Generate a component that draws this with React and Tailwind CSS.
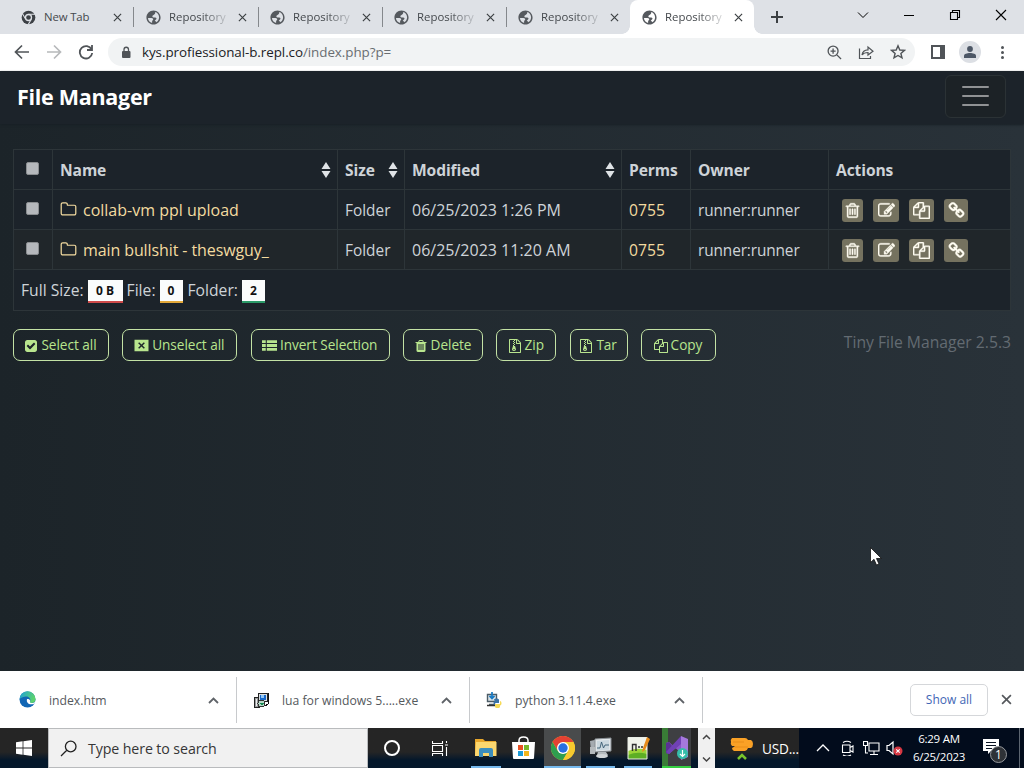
import React from "react";

const FA = {
  trashO:
    "M704 736v576q0 14-9 23t-23 9h-64q-14 0-23-9t-9-23v-576q0-14 9-23t23-9h64q14 0 23 9t9 23zm256 0v576q0 14-9 23t-23 9h-64q-14 0-23-9t-9-23v-576q0-14 9-23t23-9h64q14 0 23 9t9 23zm256 0v576q0 14-9 23t-23 9h-64q-14 0-23-9t-9-23v-576q0-14 9-23t23-9h64q14 0 23 9t9 23zm128 724v-948h-896v948q0 22 7 40.500t14.500 27 10.500 8.500h832q3 0 10.500-8.500t14.500-27 7-40.500zm-672-1076h448l-48-117q-7-9-17-11h-317q-10 2-17 11zm928 32v64q0 14-9 23t-23 9h-96v948q0 83-47 143.500t-113 60.500h-832q-66 0-113-58.500t-47-141.500v-952h-96q-14 0-23-9t-9-23v-64q0-14 9-23t23-9h309l70-167q15-37 54-63t79-26h320q40 0 79 26t54 63l70 167h309q14 0 23 9t9 23z",
  trash:
    "M704 1376v-704q0-14-9-23t-23-9h-64q-14 0-23 9t-9 23v704q0 14 9 23t23 9h64q14 0 23-9t9-23zm256 0v-704q0-14-9-23t-23-9h-64q-14 0-23 9t-9 23v704q0 14 9 23t23 9h64q14 0 23-9t9-23zm256 0v-704q0-14-9-23t-23-9h-64q-14 0-23 9t-9 23v704q0 14 9 23t23 9h64q14 0 23-9t9-23zm-544-992h448l-48-117q-7-9-17-11h-317q-10 2-17 11zm928 32v64q0 14-9 23t-23 9h-96v948q0 83-47 143.500t-113 60.500h-832q-66 0-113-58.500t-47-141.500v-952h-96q-14 0-23-9t-9-23v-64q0-14 9-23t23-9h309l70-167q15-37 54-63t79-26h320q40 0 79 26t54 63l70 167h309q14 0 23 9t9 23z",
  edit: "M888 1184l116-116-152-152-116 116v56h96v96h56zm440-720q-16-16-33 1l-350 350q-17 17-1 33t33-1l350-350q17-17 1-33zm80 594v190q0 119-84.500 203.500t-203.500 84.500h-832q-119 0-203.500-84.500t-84.500-203.500v-832q0-119 84.500-203.500t203.500-84.500h832q63 0 117 25 15 7 18 23 3 17-9 29l-49 49q-14 14-32 8-23-6-45-6h-832q-66 0-113 47t-47 113v832q0 66 47 113t113 47h832q66 0 113-47t47-113v-126q0-13 9-22l64-64q15-15 35-7t20 29zm-96-738l288 288-672 672h-288v-288zm444 132l-92 92-288-288 92-92q28-28 68-28t68 28l152 152q28 28 28 68t-28 68z",
  files:
    "M1696 384q40 0 68 28t28 68v1216q0 40-28 68t-68 28h-960q-40 0-68-28t-28-68v-288h-544q-40 0-68-28t-28-68v-672q0-40 20-88t48-76l408-408q28-28 76-48t88-20h416q40 0 68 28t28 68v328q68-40 128-40h416zm-544 213l-299 299h299v-299zm-640-384l-299 299h299v-299zm196 647l316-316v-416h-384v416q0 40-28 68t-68 28h-416v640h512v-256q0-40 20-88t48-76zm956 804v-1152h-384v416q0 40-28 68t-68 28h-416v640h896z",
  link: "M1520 1216q0-40-28-68l-208-208q-28-28-68-28-42 0-72 32 3 3 19 18.500t21.500 21.500 15 19 13 25.500 3.500 27.500q0 40-28 68t-68 28q-15 0-27.500-3.500t-25.500-13-19-15-21.500-21.500-18.500-19q-33 31-33 73 0 40 28 68l206 207q27 27 68 27 40 0 68-26l147-146q28-28 28-67zm-703-705q0-40-28-68l-206-207q-28-28-68-28-39 0-68 27l-147 146q-28 28-28 67 0 40 28 68l208 208q27 27 68 27 42 0 72-31-3-3-19-18.500t-21.500-21.500-15-19-13-25.500-3.500-27.500q0-40 28-68t68-28q15 0 27.500 3.500t25.500 13 19 15 21.500 21.500 18.500 19q33-31 33-73zm895 705q0 120-85 203l-147 146q-83 83-203 83-121 0-204-85l-206-207q-83-83-83-203 0-123 88-209l-88-88q-86 88-208 88-120 0-204-84l-208-208q-84-84-84-204t85-203l147-146q83-83 203-83 121 0 204 85l206 207q83 83 83 203 0 123-88 209l88 88q86-88 208-88 120 0 204 84l208 208q84 84 84 204z",
  folder:
    "M1600 1312v-704q0-40-28-68t-68-28h-704q-40 0-68-28t-28-68v-64q0-40-28-68t-68-28h-320q-40 0-68 28t-28 68v960q0 40 28 68t68 28h1216q40 0 68-28t28-68zm128-704v704q0 92-66 158t-158 66h-1216q-92 0-158-66t-66-158v-960q0-92 66-158t158-66h320q92 0 158 66t66 158v32h672q92 0 158 66t66 158z",
  check:
    "M813 1299l614-614q19-19 19-45t-19-45l-102-102q-19-19-45-19t-45 19l-467 467-211-211q-19-19-45-19t-45 19l-102 102q-19 19-19 45t19 45l358 358q19 19 45 19t45-19zm851-883v960q0 119-84.500 203.500t-203.500 84.500h-960q-119 0-203.500-84.500t-84.500-203.500v-960q0-119 84.500-203.500t203.500-84.500h960q119 0 203.500 84.500t84.500 203.500z",
  archive:
    "M768 384v-128h-128v128h128zm128 128v-128h-128v128h128zm-128 128v-128h-128v128h128zm128 128v-128h-128v128h128zm700-388q28 28 48 76t20 88v1152q0 40-28 68t-68 28h-1344q-40 0-68-28t-28-68v-1600q0-40 28-68t68-28h896q40 0 88 20t76 48zm-444-244v376h376q-10-29-22-41l-313-313q-12-12-41-22zm384 1528v-1024h-416q-40 0-68-28t-28-68v-416h-128v128h-128v-128h-512v1536h1280zm-627-721l107 349q8 27 8 52 0 83-72.500 137.500t-183.500 54.500-183.500-54.500-72.500-137.500q0-25 8-52 21-63 120-396v-128h128v128h79q22 0 39 13t23 34zm-141 465q53 0 90.500-19t37.500-45-37.500-45-90.500-19-90.500 19-37.500 45 37.500 45 90.500 19z",
  close:
    "M60 200h1672v1392h-1672zM616 496L496 616L776 896L496 1176L616 1296L896 1016L1176 1296L1296 1176L1016 896L1296 616L1176 496L896 776L616 496z",
  list: "M0 256h448v340h-448zM576 256h1216v340h-1216zM0 726h448v340h-448zM576 726h1216v340h-1216zM0 1196h448v340h-448zM576 1196h1216v340h-1216z",
};

function Fa({ name, className }) {
  return (
    <svg viewBox="0 0 1792 1792" fill="currentColor" fillRule={name === "close" ? "evenodd" : "nonzero"} className={`shrink-0 ${className}`}>
      <path d={FA[name]} />
    </svg>
  );
}

function Line({ d, className, sw = 1.5, box = 16 }) {
  return (
    <svg viewBox={`0 0 ${box} ${box}`} fill="none" stroke="currentColor" strokeWidth={sw} className={`shrink-0 ${className}`}>
      <path d={d} />
    </svg>
  );
}

const CROSS = "M1 1L9 9M9 1L1 9";

function GlobeIcon() {
  return (
    <svg viewBox="0 0 24 24" className="size-[17px] shrink-0 -ml-px">
      <path
        fill="#55595e"
        d="M12 2C6.480 2 2 6.480 2 12s4.480 10 10 10 10-4.480 10-10S17.520 2 12 2zM4.200 12.600c2.300.2 4.500-.3 6.300.5 1.300.6 1.500 2 .4 2.900-.8.700-1 1.500-.9 2.700v.9C6.800 18.800 4.300 16 4.200 12.600zM19.600 13.900c-.5 2-1.700 3.700-3.400 4.800-.4-1.200-1.400-1.500-2.400-1.700.3-1.600 1.500-2 2.300-3 .6-1-.5-1.800-1.600-2-1.600-.2-3.400.2-4-1.100-.5-1.300.5-2.100 1.600-2.600 1.300-.6 2.300-1.500 2.300-2.900 0-.5.1-.7.3-1 3 1.100 5.100 4 5.200 7.300z"
      />
    </svg>
  );
}

function MonoChrome() {
  return (
    <svg viewBox="0 0 16 16" className="size-[15px] shrink-0">
      <circle cx="8" cy="8" r="7.300" fill="#3c4045" />
      <circle cx="8" cy="8" r="3.200" fill="#3c4045" stroke="#dee1e6" strokeWidth="1.400" />
      <path d="M8 4.500H15M5 9.800L1.600 3.900M11 9.800L7.600 15.600" stroke="#dee1e6" strokeWidth="1.100" fill="none" />
    </svg>
  );
}

function Tab({ label, active, first, last }) {
  return (
    <div className={`flex items-center h-[34px] shrink-0 ${first ? "w-[134px] pl-[21px]" : "w-[124px] pl-[12px]"} ${active ? "relative rounded-t-lg bg-white" : ""}`}>
      {first ? <MonoChrome /> : <GlobeIcon />}
      <span
        className={`shrink-0 whitespace-nowrap text-[#45494d] ${
          first
            ? "ml-2 w-[62px] text-[11.400px] tracking-[-0.150px]"
            : "ml-[7px] w-[60px] text-[11.400px] [mask-image:linear-gradient(to_right,#000_55%,#0003_95%)]"
        }`}
      >
        {label}
      </span>
      <Line d={CROSS} box={10} sw={1.300} className={`size-[9px] text-[#3c4043] ${first ? "ml-[7px]" : "ml-[9px]"}`} />
      {!active && !last && <span className={`h-5 w-px shrink-0 bg-[#85888c] ${first ? "ml-[11px]" : "-mr-px ml-[11px]"}`} />}
      {active && (
        <>
          <span className="absolute bottom-0 -left-2 size-2 bg-[radial-gradient(circle_at_0_0,#dee1e6_7.500px,#fff_8px)]" />
          <span className="absolute bottom-0 -right-2 size-2 bg-[radial-gradient(circle_at_100%_0,#dee1e6_7.500px,#fff_8px)]" />
        </>
      )}
    </div>
  );
}

function TabStrip() {
  return (
    <div className="flex h-[34px] bg-[#dee1e6]">
      <Tab label="New Tab" first />
      <Tab label="Repository" />
      <Tab label="Repository" />
      <Tab label="Repository" />
      <Tab label="Repository" last />
      <Tab label="Repository" active />
      <Line d="M8 2V14M2 8H14" sw={2} className="mt-[9px] ml-[15px] size-4 text-[#3c4043]" />
      <div className="ml-auto flex h-[29px] items-center text-black">
        <Line d="M3 5.500L8 10.500L13 5.500" sw={1} className="mr-[30px] size-4" />
        <Line d="M3 8.500H13" sw={1} className="mr-[30px] size-4" />
        <Line d="M3.500 5.500H10.500V12.500H3.500ZM5.500 5.500V3.500H12.500V10.500H10.500" sw={1.100} className="mr-[30px] size-4" />
        <Line d="M3 3L13 13M13 3L3 13" sw={1.100} className="mr-[15px] size-4" />
      </div>
    </div>
  );
}

function Toolbar() {
  return (
    <div className="flex h-[37px] items-center bg-white pb-px pr-[14px] pl-[14px] text-[#505458]">
      <Line d="M15 8H2M8 1.500L1.500 8L8 14.500" sw={1.700} className="size-4" />
      <Line d="M1 8H14M8 1.500L14.500 8L8 14.500" sw={1.700} className="ml-4 size-4 text-[#b7b9bb]" />
      <Line d="M13.600 5.500A6.200 6.200 0 1 0 14.200 9M14 1V6H9" sw={1.800} className="ml-4 size-4" />
      <div className="ml-[14px] flex h-[28px] w-[807px] items-center rounded-full bg-[#f1f3f4] pl-[13px]">
        <svg viewBox="0 0 10 13" className="h-[13px] w-[10px]">
          <rect x="1" y="5" width="8.500" height="7" rx="1" fill="#505458" />
          <path d="M3 5V3.500a2.200 2.200 0 0 1 4.500 0V5" fill="none" stroke="#505458" strokeWidth="1.300" />
        </svg>
        <span className="ml-[11px] text-[13.400px] tracking-[-0.060px] whitespace-nowrap text-[#696d71]">
          <span className="text-[#202124]">kys.profiessional-b.repl.co</span>/index.php?p=
        </span>
        <div className="mr-[9px] ml-auto flex items-center gap-4">
          <Line d="M10.500 10.500L15 15M6.500 3.800V9.200M3.800 6.500H9.200M11.800 6.500A5.300 5.300 0 1 1 1.200 6.500A5.300 5.300 0 1 1 11.800 6.500" sw={1.400} className="size-[15px]" />
          <Line d="M1.500 4.500V14.500H12.500V12M4 11C4.500 7.500 6.500 6 10 5.900V3L15 7.200L10 11V8.500C7.500 8.500 5.500 9 4 11Z" sw={1.200} className="size-4" />
          <Line d="M8 1.800L9.800 6L14.400 6.400L10.900 9.400L12 13.900L8 11.500L4 13.900L5.100 9.400L1.600 6.400L6.200 6Z" sw={1.400} className="size-4" />
        </div>
      </div>
      <svg viewBox="0 0 14 14" className="ml-4 size-[14px]">
        <rect x="1" y="1" width="12" height="12" fill="none" stroke="#505458" strokeWidth="2" />
        <rect x="9" y="1" width="5" height="12" fill="#505458" />
      </svg>
      <span className="ml-[14px] flex size-[22px] items-center justify-center rounded-full bg-[#dcdfe4]">
        <svg viewBox="0 0 12 12" className="size-3" fill="#4d5766">
          <circle cx="6" cy="3" r="2.900" />
          <path d="M0 12V9.800C0 8 3 7 6 7s6 1 6 2.800V12z" />
        </svg>
      </span>
      <span className="ml-5 flex flex-col gap-[2px]">
        <i className="size-[3px] rounded-full bg-[#505458]" />
        <i className="size-[3px] rounded-full bg-[#505458]" />
        <i className="size-[3px] rounded-full bg-[#505458]" />
      </span>
    </div>
  );
}

function Check() {
  return <span className="mb-[3px] size-[13px] rounded-[2px] border border-[#8a8d90] bg-[#b5b8bc]" />;
}

function Sort() {
  return (
    <svg viewBox="0 0 10 16" className="mb-px ml-auto h-4 w-[10px]" fill="#dfe3e6">
      <path d="M5 0L9.500 7H.5zM5 16L.5 9h9z" />
    </svg>
  );
}

const GRID = "grid grid-cols-[39px_285px_67px_217px_69px_138px_182px]";
const CELL = "flex h-10 items-center border-t border-l border-[#2d3539] pl-[7px] whitespace-nowrap";

function HeadCell({ children, sort }) {
  return (
    <div className={`${CELL} pt-[2px] pr-[6px] text-[15.600px] font-bold tracking-[-0.100px]`}>
      {children}
      {sort && <Sort />}
    </div>
  );
}

function Action({ icon, className }) {
  return (
    <span className={`flex h-[23px] items-center justify-center rounded-[3px] bg-[#75725f] text-[#fffdf2] ${className}`}>
      <Fa name={icon} className="size-[17px] stroke-[#fffdf2] stroke-[40]" />
    </span>
  );
}

function FileRow({ name, date, shade, nameClass }) {
  return (
    <div className={`${GRID} ${shade}`}>
      <div className={`${CELL} pl-[12px]`}>
        <Check />
      </div>
      <div className={`${CELL} pt-px text-[#f3dba0]`}>
        <Fa name="folder" className="mb-px size-[17px]" />
        <span className={`ml-[6px] text-[16px] ${nameClass}`}>{name}</span>
      </div>
      <div className={`${CELL} pt-[2px]`}>Folder</div>
      <div className={`${CELL} pt-px text-[16px]`}>{date}</div>
      <div className={`${CELL} pt-[2px] text-[15.700px] text-[#f3dba0]`}>0755</div>
      <div className={`${CELL} pt-[2px] tracking-[-0.120px]`}>runner:runner</div>
      <div className={`${CELL} pt-[2px] pl-[13px]`}>
        <Action icon="trashO" className="w-[21px]" />
        <Action icon="edit" className="ml-[10px] w-[26px]" />
        <Action icon="files" className="ml-[10px] w-[25px]" />
        <Action icon="link" className="ml-[10px] w-[24px]" />
      </div>
    </div>
  );
}

function Stat({ value, className }) {
  return (
    <span className={`mt-px flex h-[23px] items-center justify-center border-b-2 bg-[#fafcfc] pt-px text-[12px] font-bold text-[#111] ${className}`}>
      {value}
    </span>
  );
}

function ToolButton({ icon, label, className, iconClass = "size-[14px] mr-[3px]" }) {
  return (
    <div className={`flex h-8 items-center justify-center rounded-[7px] border border-[#c3e2a5] pt-px pr-px text-[13.600px] tracking-[-0.030px] whitespace-nowrap text-[#b8e58e] ${className}`}>
      <Fa name={icon} className={iconClass} />
      {label}
    </div>
  );
}

function FileManager() {
  return (
    <div className="h-[600px] bg-linear-to-r from-[#1c2429] to-[#293239] text-[15.400px] text-[#ced3d8]">
      <div className="flex h-[53px] items-center justify-between bg-[#1c232a] pr-[18px] pb-[2px] pl-[17px] shadow-[0_1px_2px_#182026]">
        <span className="pt-[2px] text-[21.500px] font-bold tracking-[-0.280px] text-white">File Manager</span>
        <span className="flex h-[43px] w-[61px] flex-col items-center justify-center gap-[7px] rounded-md border border-[#2b3235] bg-[#1c2226] pb-px">
          <i className="h-[2px] w-[27px] rounded bg-[#909294]" />
          <i className="h-[2px] w-[27px] rounded bg-[#909294]" />
          <i className="h-[2px] w-[27px] rounded bg-[#909294]" />
        </span>
      </div>

      <div className="mt-[25px] ml-[13px] w-[998px] border-r border-b border-[#2d3539] bg-[#1c232a]">
        <div className={GRID}>
          <div className={`${CELL} pl-[12px]`}>
            <Check />
          </div>
          <HeadCell sort>Name</HeadCell>
          <HeadCell sort>Size</HeadCell>
          <HeadCell sort>Modified</HeadCell>
          <HeadCell>Perms</HeadCell>
          <HeadCell>Owner</HeadCell>
          <HeadCell>Actions</HeadCell>
        </div>
        <FileRow name="collab-vm ppl upload" date="06/25/2023 1:26 PM" shade="bg-[#1c232a]" nameClass="" />
        <FileRow name="main bullshit - theswguy_" date="06/25/2023 11:20 AM" shade="bg-[#20262a]" nameClass="tracking-[-0.100px]" />
        <div className="flex h-[41px] items-center border-t border-l border-[#2d3539] pt-px pl-[7px] text-[15.700px] whitespace-nowrap">
          Full Size:
          <Stat value="0 B" className="mr-[4px] ml-[4px] w-[35px] border-[#cf4a4a]" />
          File:
          <Stat value="0" className="mr-[5px] ml-[4px] w-[23px] border-[#e3a83a]" />
          Folder:
          <Stat value="2" className="ml-[4px] w-[23px] border-[#2b9a68]" />
        </div>
      </div>

      <div className="mt-[18px] ml-[13px] flex w-[998px] items-start justify-between">
        <div className="flex w-[703px] justify-between">
          <ToolButton icon="check" label="Select all" className="w-[96px]" />
          <ToolButton icon="close" label="Unselect all" className="w-[115px]" iconClass="size-[15px] mr-[3px]" />
          <ToolButton icon="list" label="Invert Selection" className="w-[139px]" iconClass="size-[15px] mr-[3px]" />
          <ToolButton icon="trash" label="Delete" className="w-[80px]" />
          <ToolButton icon="archive" label="Zip" className="w-[60px]" />
          <ToolButton icon="archive" label="Tar" className="w-[58px]" />
          <ToolButton icon="files" label="Copy" className="w-[75px]" />
        </div>
        <span className="mt-[2px] text-[15.700px] whitespace-nowrap text-[#636b72]">Tiny File Manager 2.5.3</span>
      </div>
    </div>
  );
}

function EdgeIcon() {
  return (
    <svg viewBox="0 0 17 17" className="size-[17px]">
      <defs>
        <linearGradient id="edgeTop" x1="0" y1="0" x2="1" y2="0.300">
          <stop offset="0" stopColor="#1da0dc" />
          <stop offset="1" stopColor="#5cd36c" />
        </linearGradient>
      </defs>
      <circle cx="8.500" cy="8.500" r="8" fill="#1266b5" />
      <path d="M.5 8.500A8 8 0 0 1 16.500 8c0 3-2 4-4 4-1.500 0-2-1-1.300-2C12 7 9 5 6.500 5.500 3 6 1 7 .5 8.500z" fill="url(#edgeTop)" />
      <path d="M8 8c-1 4 2 6 6.500 5l2-1v-1.500c-1 1-2.500 1.500-4 1.500-1.500 0-2-1-1.300-2C11 8.500 10 8 8 8z" fill="#fff" />
    </svg>
  );
}

function InstallerIcon() {
  return (
    <svg viewBox="0 0 16 16" className="size-4" shapeRendering="crispEdges">
      <path d="M1 5h5v10H1z" fill="#9a9d9e" stroke="#222" />
      <path d="M3 7v7" stroke="#eee" strokeWidth="1" />
      <path d="M5.500 1.500h9v8h-9z" fill="#d9dee0" stroke="#222" />
      <path d="M7 2.500h6v5H7z" fill="#1767c9" />
      <path d="M8 3h3v3H8z" fill="#91c6f5" />
      <path d="M15 1v11l-3 2" fill="none" stroke="#111" />
      <circle cx="8.500" cy="11.500" r="3.500" fill="#b8d9c9" stroke="#333" />
      <path d="M7 11h4l-2 3z" fill="#188b52" />
    </svg>
  );
}

function PythonIcon() {
  return (
    <svg viewBox="0 0 16 16" className="size-4">
      <path d="M1.500 2.500h9v7h-9zM3 12.500h7" fill="#dce5e9" stroke="#4c5c66" strokeWidth="1.400" />
      <path d="M1 13.500h8" stroke="#333" strokeWidth="1.500" />
      <path d="M6 0v6M3.500 3.800L6 6.500l2.500-2.700" fill="none" stroke="#1679c4" strokeWidth="1.700" />
      <path d="M8 8c0-2 5-2 5 0v3H9v2c-2 0-2-4 0-4z" fill="#3c73a5" />
      <path d="M14 9c2 0 2 4.500 0 4.500V15c0 1.500-5 1.500-5 0v-3h5z" fill="#f6da57" />
    </svg>
  );
}

function Download({ icon, name, className, padClass }) {
  return (
    <div className={`flex h-[46px] items-center border-r border-[#c8cacd] ${className} ${padClass}`}>
      {icon}
      <span className="mt-[3px] ml-[13px] text-[12.200px] whitespace-nowrap text-[#55595d]">{name}</span>
      <Line d="M1 8L5.500 3.500L10 8" box={11} sw={1.800} className="mt-px mr-[17px] ml-auto size-[11px] text-[#5f6368]" />
    </div>
  );
}

function DownloadShelf() {
  return (
    <div className="flex h-[57px] items-center bg-white">
      <Download icon={<EdgeIcon />} name="index.htm" className="w-[237px]" padClass="pl-[19px]" />
      <Download icon={<InstallerIcon />} name="lua for windows 5.....exe" className="w-[233px]" padClass="pl-[16px]" />
      <Download icon={<PythonIcon />} name="python 3.11.4.exe" className="w-[233px]" padClass="pl-[16px]" />
      <span className="ml-auto flex h-8 w-[78px] items-center justify-center rounded-[5px] border border-[#d5d7da] text-[12px] font-medium text-[#3f66b5]">
        Show all
      </span>
      <Line d={CROSS} box={10} sw={1.500} className="mr-[12px] ml-[13px] size-[11px] text-[#55585c]" />
    </div>
  );
}

function TaskItem({ children, className, bar }) {
  return (
    <div className={`flex h-10 flex-col items-center ${className}`}>
      <div className="flex h-[38px] items-center justify-center pt-[2px]">{children}</div>
      {bar && <i className={`h-[2px] self-stretch ${bar}`} />}
    </div>
  );
}

function ChromeIcon() {
  return (
    <svg viewBox="0 0 24 24" className="size-6">
      <circle cx="12" cy="12" r="12" fill="#f7c92e" />
      <path d="M12 6H22.400A12 12 0 0 0 1.600 6L6.800 15z" fill="#e34133" />
      <path d="M1.600 6L6.800 15L12 18L17.200 15L12 24A12 12 0 0 1 1.600 6z" fill="#2e9e4f" />
      <path d="M12 6H22.400A12 12 0 0 1 12 24L17.200 15z" fill="#f7c92e" />
      <circle cx="12" cy="12" r="6" fill="#fff" />
      <circle cx="12" cy="12" r="4.700" fill="#2870e0" />
    </svg>
  );
}

function Taskbar() {
  return (
    <div className="flex h-10 bg-linear-to-b from-[#252525] from-60% to-[#04172a] to-80% text-white">
      <div className="flex w-12 items-center justify-center">
        <svg viewBox="0 0 16 16" className="size-4" fill="#fff">
          <path d="M0 2.200L6.600 1.300V7.600H0zM7.400 1.200L16 0V7.600H7.400zM0 8.400H6.600V14.700L0 13.800zM7.400 8.400H16V16L7.400 14.800z" />
        </svg>
      </div>
      <div className="flex w-80 items-center border border-[#b9bbbd] bg-[#f1f1f1] pl-[11px] text-[#363636]">
        <Line d="M1 16L7 10M16 6.500A5.300 5.300 0 1 1 5.400 6.500A5.300 5.300 0 1 1 16 6.500" box={17} sw={1.300} className="size-[17px] text-[#222]" />
        <span className="mt-[2px] ml-[11px] text-[14.200px] tracking-[-0.100px]">Type here to search</span>
      </div>
      <TaskItem className="w-12">
        <i className="size-4 rounded-full border-[2.500px] border-white" />
      </TaskItem>
      <TaskItem className="w-12">
        <Line d="M.5 1V3.500H10.500V1M.5 5.500H10.500V11.500H.5ZM.5 16V13.500H10.500V16M14.500 1V3M14.500 7V16M13 5H16" box={17} sw={1.100} className="size-[17px]" />
      </TaskItem>
      <TaskItem className="ml-[7px] w-[30px]" bar="bg-[#76b9ed]">
        <svg viewBox="0 0 22 20" className="h-5 w-[22px]">
          <path d="M0 1h8l2 2h11v15H0z" fill="#e8a72c" />
          <path d="M1 4h20.500v14H0z" fill="#fbd76f" />
          <path d="M4 19v-7q0-2 2-2h10q2 0 2 2v7h-4v-4H8v4z" fill="#3c8ebd" />
        </svg>
      </TaskItem>
      <TaskItem className="ml-px w-[42px]">
        <svg viewBox="0 0 23 24" className="h-6 w-[23px]">
          <path d="M7 7V4.500q0-3.500 4.500-3.500T16 4.500V7" fill="none" stroke="#fff" strokeWidth="1.500" />
          <path d="M0 6h23l-1 16q0 1-1 1H2q-1 0-1-1z" fill="#fff" />
          <path d="M6 9h5v5H6z" fill="#e75124" />
          <path d="M12 9h5v5h-5z" fill="#78b82c" />
          <path d="M6 15h5v5H6z" fill="#1b9bd7" />
          <path d="M12 15h5v5h-5z" fill="#f2b51d" />
        </svg>
      </TaskItem>
      <TaskItem className="w-[37px] bg-[#494b4c]" bar="bg-[#76b9ed]">
        <ChromeIcon />
      </TaskItem>
      <TaskItem className="ml-[5px] w-[29px]" bar="bg-[#76b9ed]">
        <svg viewBox="0 0 23 22" className="h-[22px] w-[23px]">
          <path d="M1 4l9-2v12L2 15z" fill="#a5abb0" />
          <path d="M6 2l16-1v13L6 15z" fill="#e1e6e9" stroke="#898f94" />
          <path d="M8 4l12-1v9.500L8 13.500z" fill="#cbd8df" />
          <path d="M8 11h3l1.500-6 2 6 1.500-3h4" fill="none" stroke="#395b72" strokeWidth=".9" />
          <path d="M1 10h5v7H1zM9 15h8l2 3H8z" fill="#b5babd" />
          <ellipse cx="13" cy="19" rx="6" ry="2" fill="#d2d6d8" />
        </svg>
      </TaskItem>
      <TaskItem className="ml-[9px] w-[29px] pr-px" bar="bg-[#76b9ed]">
        <svg viewBox="0 0 23 24" className="h-6 w-[23px]">
          <path d="M1 2h19v21H1z" fill="#f0f3ea" />
          <path d="M1 15Q10 11 20 14V23H1z" fill="#9bd438" />
          <path d="M1 19Q10 15 20 18V23H1z" fill="#5dae24" />
          <path d="M1 1.500h19v21.500H1z" fill="none" stroke="#e9ede5" />
          <path d="M5.500 15V8.500h3.500V15M11 11h2M14 11h2" fill="none" stroke="#303030" strokeWidth="1.400" />
          <path d="M20 1l3 2-5 11-3 2 1-4z" fill="#e78c1b" />
        </svg>
      </TaskItem>
      <TaskItem className="ml-[9px] w-[29px] bg-linear-to-r from-[#397c36] from-[6px] to-[#3e3f42] to-[6px]" bar="bg-[#35cf42]">
        <svg viewBox="0 0 24 24" className="h-6 w-6">
          <path d="M1 7l3-1 13 12V6L4 18l-3-1z" fill="#8956c9" />
          <path d="M1 7l3-1 4 5-4 7-3-1z" fill="#5b3295" />
          <path d="M16 0l7 3v18l-7 3z" fill="#a578dd" />
          <path d="M16 0v8L4 18l-3-2z" fill="#7041b5" />
          <circle cx="17.500" cy="17.500" r="5.500" fill="#35bda9" />
          <path d="M17.500 14v6M15 18l2.500 2.500L20 18" fill="none" stroke="#fff" strokeWidth="1.200" />
        </svg>
      </TaskItem>
      <div className="ml-[7px] flex w-[17px] flex-col items-center justify-between bg-[#f0f0f0] pt-[5px] pb-[4px] text-[#444]">
        <Line d="M1 6L4.500 2.500L8 6" box={9} sw={1.500} className="size-[9px]" />
        <Line d="M1 2.500L4.500 6L8 2.500" box={9} sw={1.500} className="size-[9px]" />
      </div>
      <div className="flex w-[84px] items-center pl-[14px]">
        <svg viewBox="0 0 25 25" className="h-[25px] w-[25px] shrink-0">
          <path d="M3 2h13q2 0 3 2h3q2 1 2 4t-2 4h-3q-1 3-3 3H5q-2-1-2-3 2-1 3-2H3Q1 8 2 6 1 4 3 2z" fill="#faa126" />
          <path d="M4 6h11M6 11h13" stroke="#e88d18" />
          <path d="M9 23l4-4 4 4" fill="none" stroke="#79c42c" strokeWidth="2.500" />
        </svg>
        <span className="mt-[2px] ml-[8px] text-[13.600px] tracking-[-0.180px]">USD...</span>
      </div>
      <div className="flex flex-1 items-center bg-[#020c1c]">
        <Line d="M1 9L7 3L13 9" box={14} sw={1.300} className="mt-px ml-[17px] size-[14px]" />
        <Line d="M2.500 5h7.500v7.500H2.500zM10 7.500l3-1.500v6L10 10.500M3 2.500Q7 0 11 2.500M3 15Q7 17.500 11 15" box={16} sw={1.100} className="ml-[10px] size-4" />
        <Line d="M6 3h10v8H6zM11 11v3.500M7 14.500h8M.5 1.500h4v4h-4zM2.500 5.500V13H5" box={17} sw={1.100} className="ml-[7px] size-[17px]" />
        <svg viewBox="0 0 17 16" className="ml-[6px] h-4 w-[17px] shrink-0">
          <path d="M1 5.500h2L7 2v12l-4-3.500H1z" fill="none" stroke="#fff" strokeWidth="1.200" />
          <circle cx="12" cy="11" r="4.500" fill="#d73843" />
          <path d="M10.300 9.300l3.400 3.400m0-3.400l-3.400 3.400" stroke="#fff" strokeWidth="1.100" />
        </svg>
        <div className="ml-[7px] flex w-[58px] flex-col items-center text-[11.500px] leading-[18px] tracking-[-0.250px] whitespace-nowrap">
          <span>6:29 AM</span>
          <span>6/25/2023</span>
        </div>
        <div className="relative ml-[15px] h-6 w-6">
          <svg viewBox="0 0 24 24" className="size-6">
            <path d="M0 3h16v12H8l-3 3v-3H0z" fill="#fff" />
            <path d="M3 6.500h10M3 9.500h10M3 12.500h6" stroke="#0b1524" strokeWidth="1.200" />
          </svg>
          <span className="absolute top-[10px] left-[7px] flex size-[17px] items-center justify-center rounded-full border border-[#96999d] bg-[#2e3237] text-[12px]">1</span>
        </div>
        <i className="mr-1 ml-auto h-full w-px bg-[#5c6570]" />
      </div>
    </div>
  );
}

export default function App() {
  return (
    <div className="relative flex h-[768px] w-[1024px] flex-col overflow-hidden bg-[#1c2429] font-['Open_Sans','Noto_Sans',sans-serif]">
      <TabStrip />
      <Toolbar />
      <FileManager />
      <DownloadShelf />
      <Taskbar />
      <svg viewBox="0 0 12 19" className="absolute top-[547px] left-[870px] h-[19px] w-3">
        <path d="M.5.500V15.500L4 12.300L6.500 18L9 17L6.500 11.500H11.500z" fill="#fff" stroke="#111" strokeWidth=".8" />
      </svg>
    </div>
  );
}
